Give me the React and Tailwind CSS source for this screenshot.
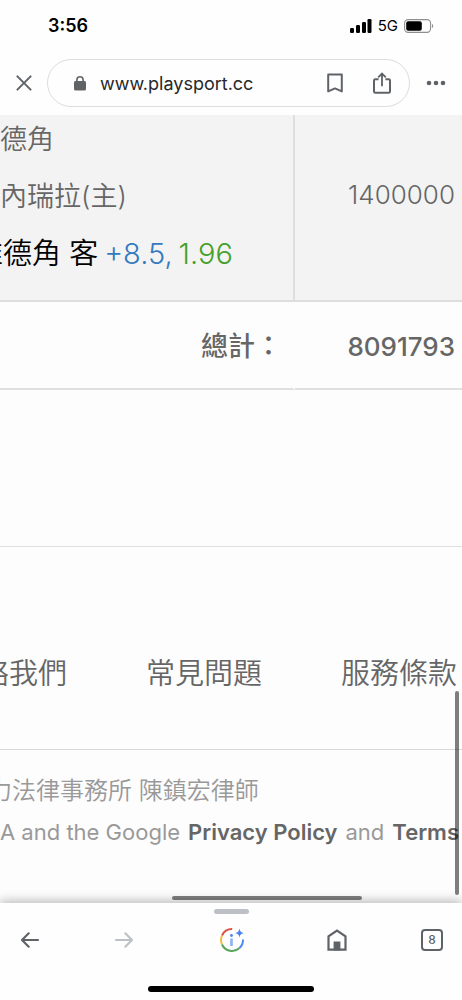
import React from 'react';

const navLinks = ['常見問題', '服務條款'];

const StatusBar = () => (
  <div className="flex items-center justify-between pt-4 pl-12 pr-7 h-9">
    <span className="text-lg leading-5 font-semibold text-black">3:56</span>
    <div className="flex items-center gap-1.5">
      <svg width="22" height="14" viewBox="0 0 22 14" fill="#000">
        <rect x="0" y="9" width="4" height="5" rx="1.2" />
        <rect x="6" y="6" width="4" height="8" rx="1.2" />
        <rect x="12" y="3" width="4" height="11" rx="1.2" />
        <rect x="17.5" y="0" width="4" height="14" rx="1.2" />
      </svg>
      <span className="text-[15px] leading-5 text-black">5G</span>
      <svg width="30" height="14" viewBox="0 0 30 14">
        <rect x="0.6" y="0.6" width="26" height="12.8" rx="3.6" fill="none" stroke="#8f8f8f" strokeWidth="1.1" />
        <rect x="2.2" y="2.2" width="15.6" height="9.6" rx="2" fill="#000" />
        <path d="M28 4.8c1.6.7 1.6 3.7 0 4.4z" fill="#8f8f8f" />
      </svg>
    </div>
  </div>
);

const AddressBar = () => (
  <div className="flex items-center pt-[23px] pb-2">
    <button aria-label="Close" className="flex flex-none w-[47px] justify-center">
      <svg width="16" height="16" viewBox="0 0 16 16" stroke="#5f6368" strokeWidth="2" strokeLinecap="round">
        <path d="M1.4 1.4l13.2 13.2M14.6 1.4L1.4 14.6" />
      </svg>
    </button>
    <div className="flex flex-1 min-w-0 items-center h-12 pl-[26px] pr-[18px] rounded-full border border-[#dcdde0]">
      <svg width="12" height="15" viewBox="0 0 12 15" className="flex-none">
        <rect x="0" y="5" width="12" height="9.6" rx="1.5" fill="#5f6368" />
        <path d="M2.9 6V3.9a3.1 3.1 0 0 1 6.2 0V6" fill="none" stroke="#5f6368" strokeWidth="1.6" />
      </svg>
      <span className="flex-1 min-w-0 pt-px ml-3.5 text-lg leading-6 text-[#26282b]">www.playsport.cc</span>
      <button aria-label="Bookmark" className="flex-none">
        <svg width="16" height="20" viewBox="0 0 16 20" fill="none" stroke="#5f6368" strokeWidth="2" strokeLinejoin="round">
          <path d="M1.2 1.4h13.6v17L8 15.4l-6.8 3z" />
        </svg>
      </button>
      <button aria-label="Share" className="flex-none ml-[30px]">
        <svg width="18" height="22" viewBox="0 0 18 22" fill="none" stroke="#5f6368" strokeWidth="2">
          <path d="M5.6 7.2H2.4A1.4 1.4 0 0 0 1 8.6V19.4A1.4 1.4 0 0 0 2.4 20.8H15.6A1.4 1.4 0 0 0 17 19.4V8.6A1.4 1.4 0 0 0 15.6 7.2H12.4" />
          <path d="M9 14.2V2M5.2 5.4L9 1.6l3.8 3.8" strokeWidth="1.8" />
        </svg>
      </button>
    </div>
    <button aria-label="More" className="flex flex-none w-[52px] justify-center">
      <svg width="20" height="6" viewBox="0 0 20 6" fill="#5f6368">
        <circle cx="3" cy="3" r="2.3" />
        <circle cx="10" cy="3" r="2.3" />
        <circle cx="17" cy="3" r="2.3" />
      </svg>
    </button>
  </div>
);

const BetTable = () => (
  <table className="w-full -mt-[27px] border-separate border-spacing-0 text-[#666]">
    <tbody>
      <tr className="bg-[#f3f3f3]">
        <td className="pt-[23px] pb-[18px] border-r-2 border-b-2 border-[#dedede] whitespace-nowrap">
          <p className="text-[27px] leading-[57px] font-[350]">德角</p>
          <p className="text-[27px] leading-[57px] font-[350]">內瑞拉(主)</p>
          <div className="flex gap-1.5 -ml-[26px] text-[29px] leading-[57px] font-[350]">
            <span className="text-black">維德角 客</span>
            <span className="text-[#337ac0]">+8.5,</span>
            <span className="text-[#44a029]">1.96</span>
          </div>
        </td>
        <td className="w-[167px] pr-[7px] border-b-2 border-[#dedede] text-right text-[26px] font-[350]">1400000</td>
      </tr>
      <tr>
        <td className="h-[88px] pt-1 pr-[11px] border-b-2 border-r-2 border-b-[#e0e0e0] border-r-[#fdfdfd] text-right text-[27px] font-medium">
          總計：
        </td>
        <td className="pt-0.5 pr-[7px] border-b-2 border-[#e0e0e0] text-right text-[26px] font-medium">8091793</td>
      </tr>
    </tbody>
  </table>
);

const PageFooter = () => (
  <footer className="mt-[156px] border-t border-[#dfdfdf]">
    <nav className="flex gap-[79px] pt-[107px] pb-[55px] -ml-5 whitespace-nowrap border-b border-[#d8d8d8] text-[29px] leading-10 font-[350] text-[#666]">
      <a href="#contact">絡我們</a>
      {navLinks.map((label) => (
        <a key={label} href="#info">{label}</a>
      ))}
    </nav>
    <div className="pt-5 whitespace-nowrap font-[350] text-[#999]">
      <p className="-ml-3 text-2xl leading-[42px]">力法律事務所 陳鎮宏律師</p>
      <div className="flex gap-2 text-[22px] leading-10 font-normal">
        <span>A and the Google</span>
        <a href="#privacy" className="font-semibold text-[#666]">Privacy Policy</a>
        <span>and</span>
        <a href="#terms" className="font-semibold text-[#666]">Terms</a>
      </div>
    </div>
  </footer>
);

const BottomBar = () => (
  <div className="relative bg-[#fefefe] pt-1.5 pb-2 shadow-[0_-2px_10px_rgba(0,0,0,0.28)]">
    <div className="mx-auto w-[35px] h-[5px] rounded-full bg-[#bdc1c6]"></div>
    <div className="flex items-center justify-between pt-2.5 pl-5 pr-[19px]">
      <button aria-label="Back">
        <svg width="20" height="32" viewBox="0 0 20 32" fill="none" stroke="#5f6368" strokeWidth="2.2" strokeLinecap="round" strokeLinejoin="round">
          <path d="M18 16H2M8.7 9.3L2 16l6.7 6.7" />
        </svg>
      </button>
      <button aria-label="Forward" disabled>
        <svg width="20" height="32" viewBox="0 0 20 32" fill="none" stroke="#bdc1c6" strokeWidth="2.2" strokeLinecap="round" strokeLinejoin="round">
          <path d="M2 16h16M11.3 9.3L18 16l-6.7 6.7" />
        </svg>
      </button>
      <button aria-label="Page info" className="ml-2.5">
        <svg width="26" height="32" viewBox="0 0 26 32" fill="none" strokeWidth="2">
          <path d="M13.2 5A11 11 0 0 0 3 11.5" stroke="#dd5144" />
          <path d="M3 11.5A11 11 0 0 0 3 20.5" stroke="#f2be42" />
          <path d="M3 20.5A11 11 0 0 0 20.5 24" stroke="#58a55c" />
          <path d="M20.5 24A11 11 0 0 0 24 15.5" stroke="#4c8bf5" />
          <path d="M12.5 14.5v7.5" stroke="#8ab0f8" strokeWidth="2.6" />
          <circle cx="12.5" cy="11.5" r="1.4" fill="#4c7ff0" />
          <path d="M20.5 4.2C21 7.5 22 8.5 25.4 9.1c-3.4.6-4.4 1.6-4.9 4.9-.5-3.3-1.5-4.3-4.9-4.9 3.4-.6 4.4-1.6 4.9-4.9z" fill="#4c7ff0" />
        </svg>
      </button>
      <button aria-label="Home" className="ml-2">
        <svg width="20" height="32" viewBox="0 0 20 32">
          <path d="M1.5 25.6V12.3L10 6.6l8.5 5.7v13.3z" fill="none" stroke="#5f6368" strokeWidth="2.2" />
          <rect x="6.6" y="17.5" width="6.8" height="9" fill="#5f6368" />
        </svg>
      </button>
      <button aria-label="Tabs" className="flex items-center justify-center w-[22px] h-[22px] rounded-[4px] border-2 border-[#5f6368] text-xs leading-3 font-medium text-[#5f6368]">
        8
      </button>
    </div>
    <div className="mx-auto mt-[30px] w-[166px] h-[6px] rounded-full bg-black"></div>
  </div>
);

export default function App() {
  return (
    <div className="flex flex-col min-h-screen overflow-hidden bg-[#fdfdfd] font-['Inter','Noto_Sans_CJK_TC',sans-serif]">
      <header className="bg-[#fefefe]">
        <StatusBar />
        <AddressBar />
      </header>
      <main className="relative flex-1 overflow-hidden">
        <BetTable />
        <PageFooter />
        {/* scroll indicators */}
        <div className="absolute right-[3px] bottom-2 w-1 h-[204px] rounded-full bg-black/50"></div>
        <div className="absolute left-[172px] bottom-[3px] w-[190px] h-1 rounded-full bg-black/50"></div>
      </main>
      <BottomBar />
    </div>
  );
}
